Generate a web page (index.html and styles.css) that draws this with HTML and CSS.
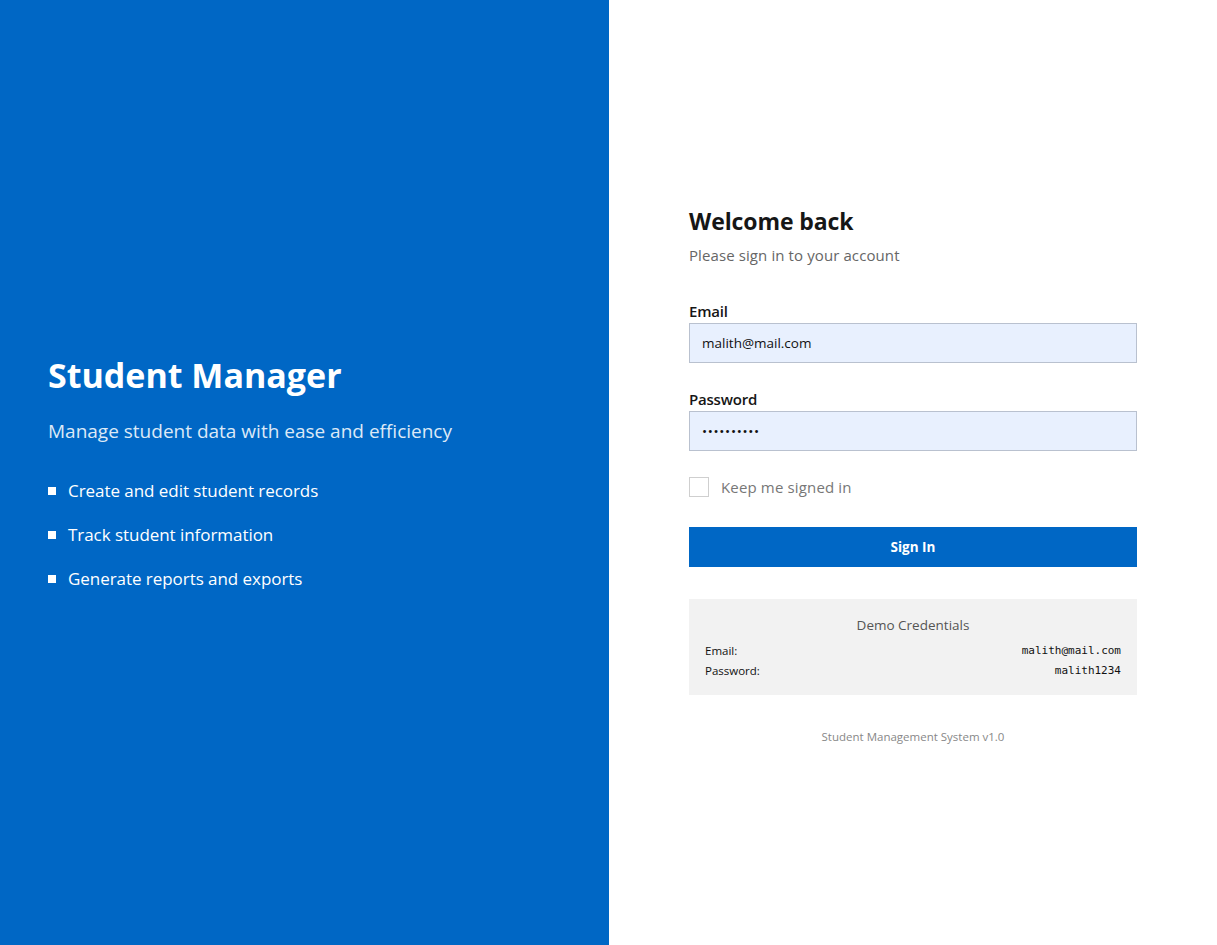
FILE: index.html
```html
<!DOCTYPE html>
<html lang="en">
<head>
<meta charset="utf-8">
<title>Student Manager - Sign In</title>
<link rel="stylesheet" href="styles.css">
</head>
<body>
<div class="page">
  <section class="brand">
    <h1 class="brand-title">Student Manager</h1>
    <p class="brand-sub">Manage student data with ease and efficiency</p>
    <ul class="features">
      <li>Create and edit student records</li>
      <li>Track student information</li>
      <li>Generate reports and exports</li>
    </ul>
  </section>
  <section class="auth">
    <div class="form-wrap">
      <h2 class="title">Welcome back</h2>
      <p class="subtitle">Please sign in to your account</p>
      <form class="form">
        <div class="field field-email">
          <label class="label" for="email">Email</label>
          <input class="input" id="email" type="email" value="malith@mail.com">
        </div>
        <div class="field">
          <label class="label" for="password">Password</label>
          <input class="input pw" id="password" type="password" value="malith1234">
        </div>
        <label class="check">
          <span class="box"></span>
          <span class="check-text">Keep me signed in</span>
        </label>
        <button type="button" class="btn">Sign In</button>
      </form>
      <div class="demo">
        <div class="demo-title">Demo Credentials</div>
        <div class="demo-row"><span>Email:</span><code>malith@mail.com</code></div>
        <div class="demo-row"><span>Password:</span><code>malith1234</code></div>
      </div>
      <p class="footer">Student Management System v1.0</p>
    </div>
  </section>
</div>
</body>
</html>
```
FILE: styles.css
```css
* { box-sizing: border-box; }
html, body { margin: 0; padding: 0; height: 100%; }
body {
  font-family: "Open Sans", "Noto Sans", sans-serif;
  color: #1b1b1b;
}
.page {
  display: flex;
  height: 945px;
}
.brand {
  width: 609px;
  background: #0067c5;
  color: #fff;
  display: flex;
  flex-direction: column;
  justify-content: center;
  padding: 0 48px;
}
.brand-title {
  margin: 0 0 20px;
  font-size: 34px;
  font-weight: 700;
  line-height: 44px;
  letter-spacing: 0;
}
.brand-sub {
  margin: 0 0 32px;
  font-size: 19px;
  line-height: 28px;
  color: #dce9f7;
  letter-spacing: 0;
}
.features {
  list-style: none;
  margin: 0;
  padding: 0;
  display: flex;
  flex-direction: column;
  gap: 16px;
}
.features li {
  display: flex;
  align-items: center;
  gap: 12px;
  font-size: 17px;
  line-height: 28px;
  letter-spacing: -0.05px;
}
.features li::before {
  content: "";
  width: 8px;
  height: 8px;
  background: #fff;
  flex: none;
}
.auth {
  flex: 1;
  display: flex;
  flex-direction: column;
  justify-content: center;
  padding: 3px 80px 0;
}
.form-wrap {
  width: 448px;
}
.title {
  margin: 0 0 6px;
  font-size: 23px;
  font-weight: 700;
  line-height: 32px;
  color: #161616;
  letter-spacing: -0.1px;
}
.subtitle {
  margin: 0 0 33px;
  font-size: 15px;
  line-height: 24px;
  color: #666;
  letter-spacing: 0.1px;
}
.form {
  display: flex;
  flex-direction: column;
}
.field {
  display: flex;
  flex-direction: column;
  margin-bottom: 24px;
}
.field-email {
  margin-bottom: 25px;
}
.label {
  font-size: 15px;
  font-weight: 600;
  line-height: 22px;
  margin-bottom: 1px;
  color: #161616;
  letter-spacing: -0.2px;
}
.input {
  height: 40px;
  width: 100%;
  border: 1px solid #b9c1cf;
  background: #e8f0fe;
  padding: 0 12px;
  font-family: "Open Sans", sans-serif;
  font-size: 13.5px;
  color: #111;
  outline: none;
  border-radius: 0;
}
.pw {
  letter-spacing: 0.7px;
}
.check {
  display: flex;
  align-items: center;
  gap: 12px;
  margin: 2px 0 30px;
  height: 20px;
}
.box {
  width: 20px;
  height: 20px;
  border: 1px solid #cfcfcf;
  background: #fff;
}
.check-text {
  font-size: 15px;
  color: #777;
  letter-spacing: 0.15px;
}
.btn {
  height: 40px;
  width: 100%;
  border: none;
  background: #0067c5;
  color: #fff;
  font-family: "Open Sans", sans-serif;
  font-size: 13.5px;
  font-weight: 700;
  border-radius: 0;
  margin-bottom: 32px;
}
.demo {
  background: #f2f2f2;
  padding: 16px 16px 14px;
}
.demo-title {
  text-align: center;
  font-size: 13.5px;
  color: #555;
  line-height: 20px;
  margin-bottom: 6px;
}
.demo-row {
  display: flex;
  justify-content: space-between;
  font-size: 11.5px;
  line-height: 20px;
  color: #111;
}
.demo-row code {
  font-family: "DejaVu Sans Mono", "Liberation Mono", monospace;
  font-size: 11px;
}
.footer {
  margin: 34px 0 0;
  text-align: center;
  font-size: 11.5px;
  color: #888;
}
```
